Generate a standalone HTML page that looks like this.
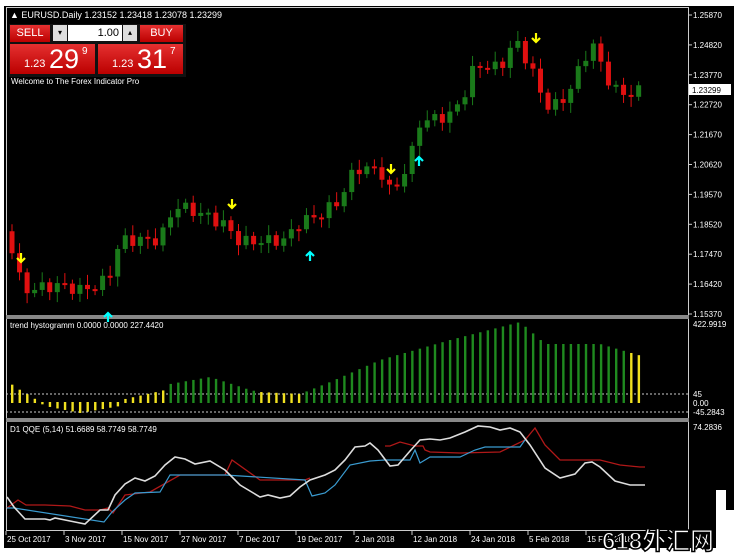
<!DOCTYPE html>
<html><head><meta charset="utf-8"><style>
body{margin:0;width:734px;height:558px;background:#fff;overflow:hidden;font-family:"Liberation Sans",sans-serif}
#c{position:absolute;left:0;top:0}
.t{font-size:9px;fill:#fff;font-family:"Liberation Sans",sans-serif}
.btn{position:absolute;background:linear-gradient(#e53030,#b00);color:#fff;}
</style></head><body>
<svg id="c" width="734" height="558" xmlns="http://www.w3.org/2000/svg">
<rect x="4" y="6" width="730" height="542" fill="#000"/>
<rect x="6.5" y="7.5" width="682" height="523" fill="none" stroke="#ccc"/>
<rect x="6" y="315" width="683" height="4" fill="#888"/>
<rect x="6" y="418" width="683" height="4" fill="#888"/>
<line x1="6" y1="394" x2="689" y2="394" stroke="#ccc" stroke-dasharray="2,2"/>
<line x1="6" y1="412" x2="689" y2="412" stroke="#ccc" stroke-dasharray="2,2"/>
<g id="cand"></g><g id="hist"></g>
<polyline fill="none" stroke="#b01818" stroke-width="1.3" points="7,508 18,500 26,505 45,505 70,506 85,510 100,510 108,508 113,513 125,495 150,492 180,475 225,475 232,460 260,480 305,480 310,478"/>
<polyline fill="none" stroke="#b01818" stroke-width="1.3" points="385,446 390,446 400,442 415,446 423,446 425,450 430,452 460,453 500,452 525,440 535,428 545,445 560,460 600,460 620,465 640,467 645,467"/>
<polyline fill="none" stroke="#3a9bd0" stroke-width="1.2" points="7,508 14,508 104,522 112,512 125,500 135,493 160,492 170,475 225,475 305,480 312,496 325,493 335,485 350,465 370,461 385,460 410,460 415,450 420,463 430,457 460,457 475,450 485,447 520,447 525,440"/>
<polyline fill="none" stroke="#ddd" stroke-width="1.6" points="7,497 14,507 25,519 45,519 50,520 55,518 70,521 85,524 100,510 108,510 115,495 125,484 135,478 145,481 155,476 165,465 175,457 185,459 195,464 210,461 225,470 240,485 260,497 268,495 280,498 290,496 300,487 310,480 325,475 335,470 345,460 355,447 365,446 370,443 378,450 390,466 398,465 410,451 420,440 430,439 440,440 450,438 465,432 478,426 490,427 500,430 510,428 520,432 530,445 545,468 560,478 575,474 585,463 592,462 600,467 615,481 630,485 645,485"/>
<line x1="6" y1="530.5" x2="689" y2="530.5" stroke="#ccc"/>
<g class="t" id="ax"></g>
<text class="t" x="10" y="18">▲ EURUSD.Daily  1.23152 1.23418 1.23078 1.23299</text>
<text class="t" x="11" y="84" style="font-size:8px">Welcome to The Forex Indicator Pro</text>
<text class="t" x="10" y="328" style="font-size:8px">trend hystogramm 0.0000 0.0000 227.4420</text>
<text class="t" x="10" y="432" style="font-size:8px">D1  QQE (5,14) 51.6689 58.7749 58.7749</text>
<rect x="689" y="84" width="42" height="11" fill="#fff"/>
<text class="t" x="692" y="93" style="fill:#000;font-size:8px">1.23299</text>
<rect x="716" y="490" width="18" height="68" fill="#fff"/>
<rect x="0" y="548" width="734" height="10" fill="#fff"/>
<rect x="726" y="490" width="8" height="20" fill="#000"/>
<text x="602" y="549" style="font-size:24px;font-weight:bold;fill:#fff;stroke:#000;stroke-width:1.5;font-family:'Liberation Sans','Noto Sans CJK SC',sans-serif">618外汇网</text>
</svg>
<div style="position:absolute;left:9px;top:24px;width:177px;height:53px;background:#111"></div>
<div class="btn" style="left:10px;top:25px;width:40px;height:17px;font-size:11px;text-align:center;line-height:17px">SELL</div>
<div style="position:absolute;left:53px;top:25px;width:14px;height:16px;background:#ddd;font-size:8px;text-align:center;line-height:16px">▾</div>
<div style="position:absolute;left:68px;top:25px;width:54px;height:16px;background:#fff;font-size:11px;text-align:right;line-height:16px;padding-right:3px;box-sizing:border-box">1.00</div>
<div style="position:absolute;left:123px;top:25px;width:14px;height:16px;background:#ddd;font-size:8px;text-align:center;line-height:16px">▴</div>
<div class="btn" style="left:140px;top:25px;width:43px;height:17px;font-size:11px;text-align:center;line-height:17px">BUY</div>
<div class="btn" style="left:10px;top:44px;width:85px;height:30px"><span style="position:absolute;left:14px;top:14px;font-size:11px">1.23</span><span style="position:absolute;left:39px;top:0px;font-size:27px">29</span><span style="position:absolute;left:72px;top:2px;font-size:10px">9</span></div>
<div class="btn" style="left:98px;top:44px;width:85px;height:30px"><span style="position:absolute;left:14px;top:14px;font-size:11px">1.23</span><span style="position:absolute;left:39px;top:0px;font-size:27px">31</span><span style="position:absolute;left:72px;top:2px;font-size:10px">7</span></div>
<script>
(function(){
var ns="http://www.w3.org/2000/svg";
function el(p,t,a){var e=document.createElementNS(ns,t);for(var k in a)e.setAttribute(k,a[k]);p.appendChild(e);return e;}
var kp=[[10,240],[18,275],[25,290],[60,285],[80,290],[100,285],[112,270],[120,240],[160,240],[175,205],[205,215],[225,225],[240,242],[285,240],[300,222],[320,215],[340,200],[355,168],[380,170],[392,195],[410,160],[420,122],[450,115],[462,100],[475,65],[500,68],[515,40],[530,65],[545,105],[560,105],[572,85],[592,42],[605,75],[620,95],[645,90]];
function py(x){for(var i=1;i<kp.length;i++)if(x<=kp[i][0]){var a=kp[i-1],b=kp[i];return a[1]+(b[1]-a[1])*(x-a[0])/(b[0]-a[0]);}return 90;}
function L(x,pts){for(var i=1;i<pts.length;i++)if(x<=pts[i][0]){var a=pts[i-1],b=pts[i];return a[1]+(b[1]-a[1])*(x-a[0])/(b[0]-a[0]);}return pts[pts.length-1][1];}
var hp=[[8,20],[20,12],[35,3],[45,-3],[80,-10],[120,-3],[125,3],[165,12],[170,18],[210,25],[250,12],[260,10],[300,8],[330,20],[380,42],[450,62],[520,80],[545,58],[600,58],[645,45]];
var g=document.getElementById('cand'),h=document.getElementById('hist');
var prev=py(8),n=0;
for(var x=12;x<=645;x+=7.55){n++;var c=py(x)+Math.sin(n*2.3)*6;var o=prev;var up=c<o;var col=up?'#1a7a1a':'#e01010';
var tp=Math.min(o,c),bt=Math.max(o,c);if(bt-tp<2)bt=tp+2;
el(g,'line',{x1:x,y1:tp-4-(n%3)*3,x2:x,y2:bt+4+(n%4)*2,stroke:col});
el(g,'rect',{x:x-2.5,y:tp,width:5,height:bt-tp,fill:col});prev=c;
var v=L(x,hp);
var yel=(x<166)||(x>255&&x<302)||(x>628);
var hc=yel?'#f0e020':'#1f8a1f';var b0=402;
el(h,'rect',{x:x-1,y:v>0?b0-v:b0,width:2.4,height:Math.abs(v)+1,fill:hc});}
[[21,262,'#ff0',1],[232,208,'#ff0',1],[391,173,'#ff0',1],[536,42,'#ff0',1],[310,252,'#0ff',0],[419,157,'#0ff',0],[108,313,'#0ff',0]].forEach(function(a){var x=a[0],y=a[1];
if(a[3])el(g,'path',{d:'M'+(x-4)+','+(y-4)+' L'+x+','+y+' L'+(x+4)+','+(y-4)+' M'+x+','+(y-9)+' L'+x+','+y,stroke:a[2],'stroke-width':2.2,fill:'none'});
else el(g,'path',{d:'M'+(x-4)+','+(y+4)+' L'+x+','+y+' L'+(x+4)+','+(y+4)+' M'+x+','+(y+9)+' L'+x+','+y,stroke:a[2],'stroke-width':2.2,fill:'none'});});
var ax=document.getElementById('ax');
var lab=["1.25870","1.24820","1.23770","1.22720","1.21670","1.20620","1.19570","1.18520","1.17470","1.16420","1.15370"];
lab.forEach(function(s,i){var y=15+i*29.9;el(ax,'line',{x1:689,y1:y,x2:692,y2:y,stroke:'#ccc'});var t=el(ax,'text',{x:693,y:y+3,'font-size':8});t.textContent=s;});
[[693,327,"422.9919"],[693,397,"45"],[693,406,"0.00"],[693,415,"-45.2843"],[693,430,"74.2836"]].forEach(function(a){var t=el(ax,'text',{x:a[0],y:a[1],'font-size':8});t.textContent=a[2];});
var d=[[6,"25 Oct 2017"],[64,"3 Nov 2017"],[122,"15 Nov 2017"],[180,"27 Nov 2017"],[238,"7 Dec 2017"],[296,"19 Dec 2017"],[354,"2 Jan 2018"],[412,"12 Jan 2018"],[470,"24 Jan 2018"],[528,"5 Feb 2018"],[586,"15 Feb 2018"]];
d.forEach(function(a){el(ax,'line',{x1:a[0],y1:531,x2:a[0],y2:535,stroke:'#ccc'});var t=el(ax,'text',{x:a[0]+1,y:542,'font-size':8});t.textContent=a[1];});
})();
</script>
</body></html>
